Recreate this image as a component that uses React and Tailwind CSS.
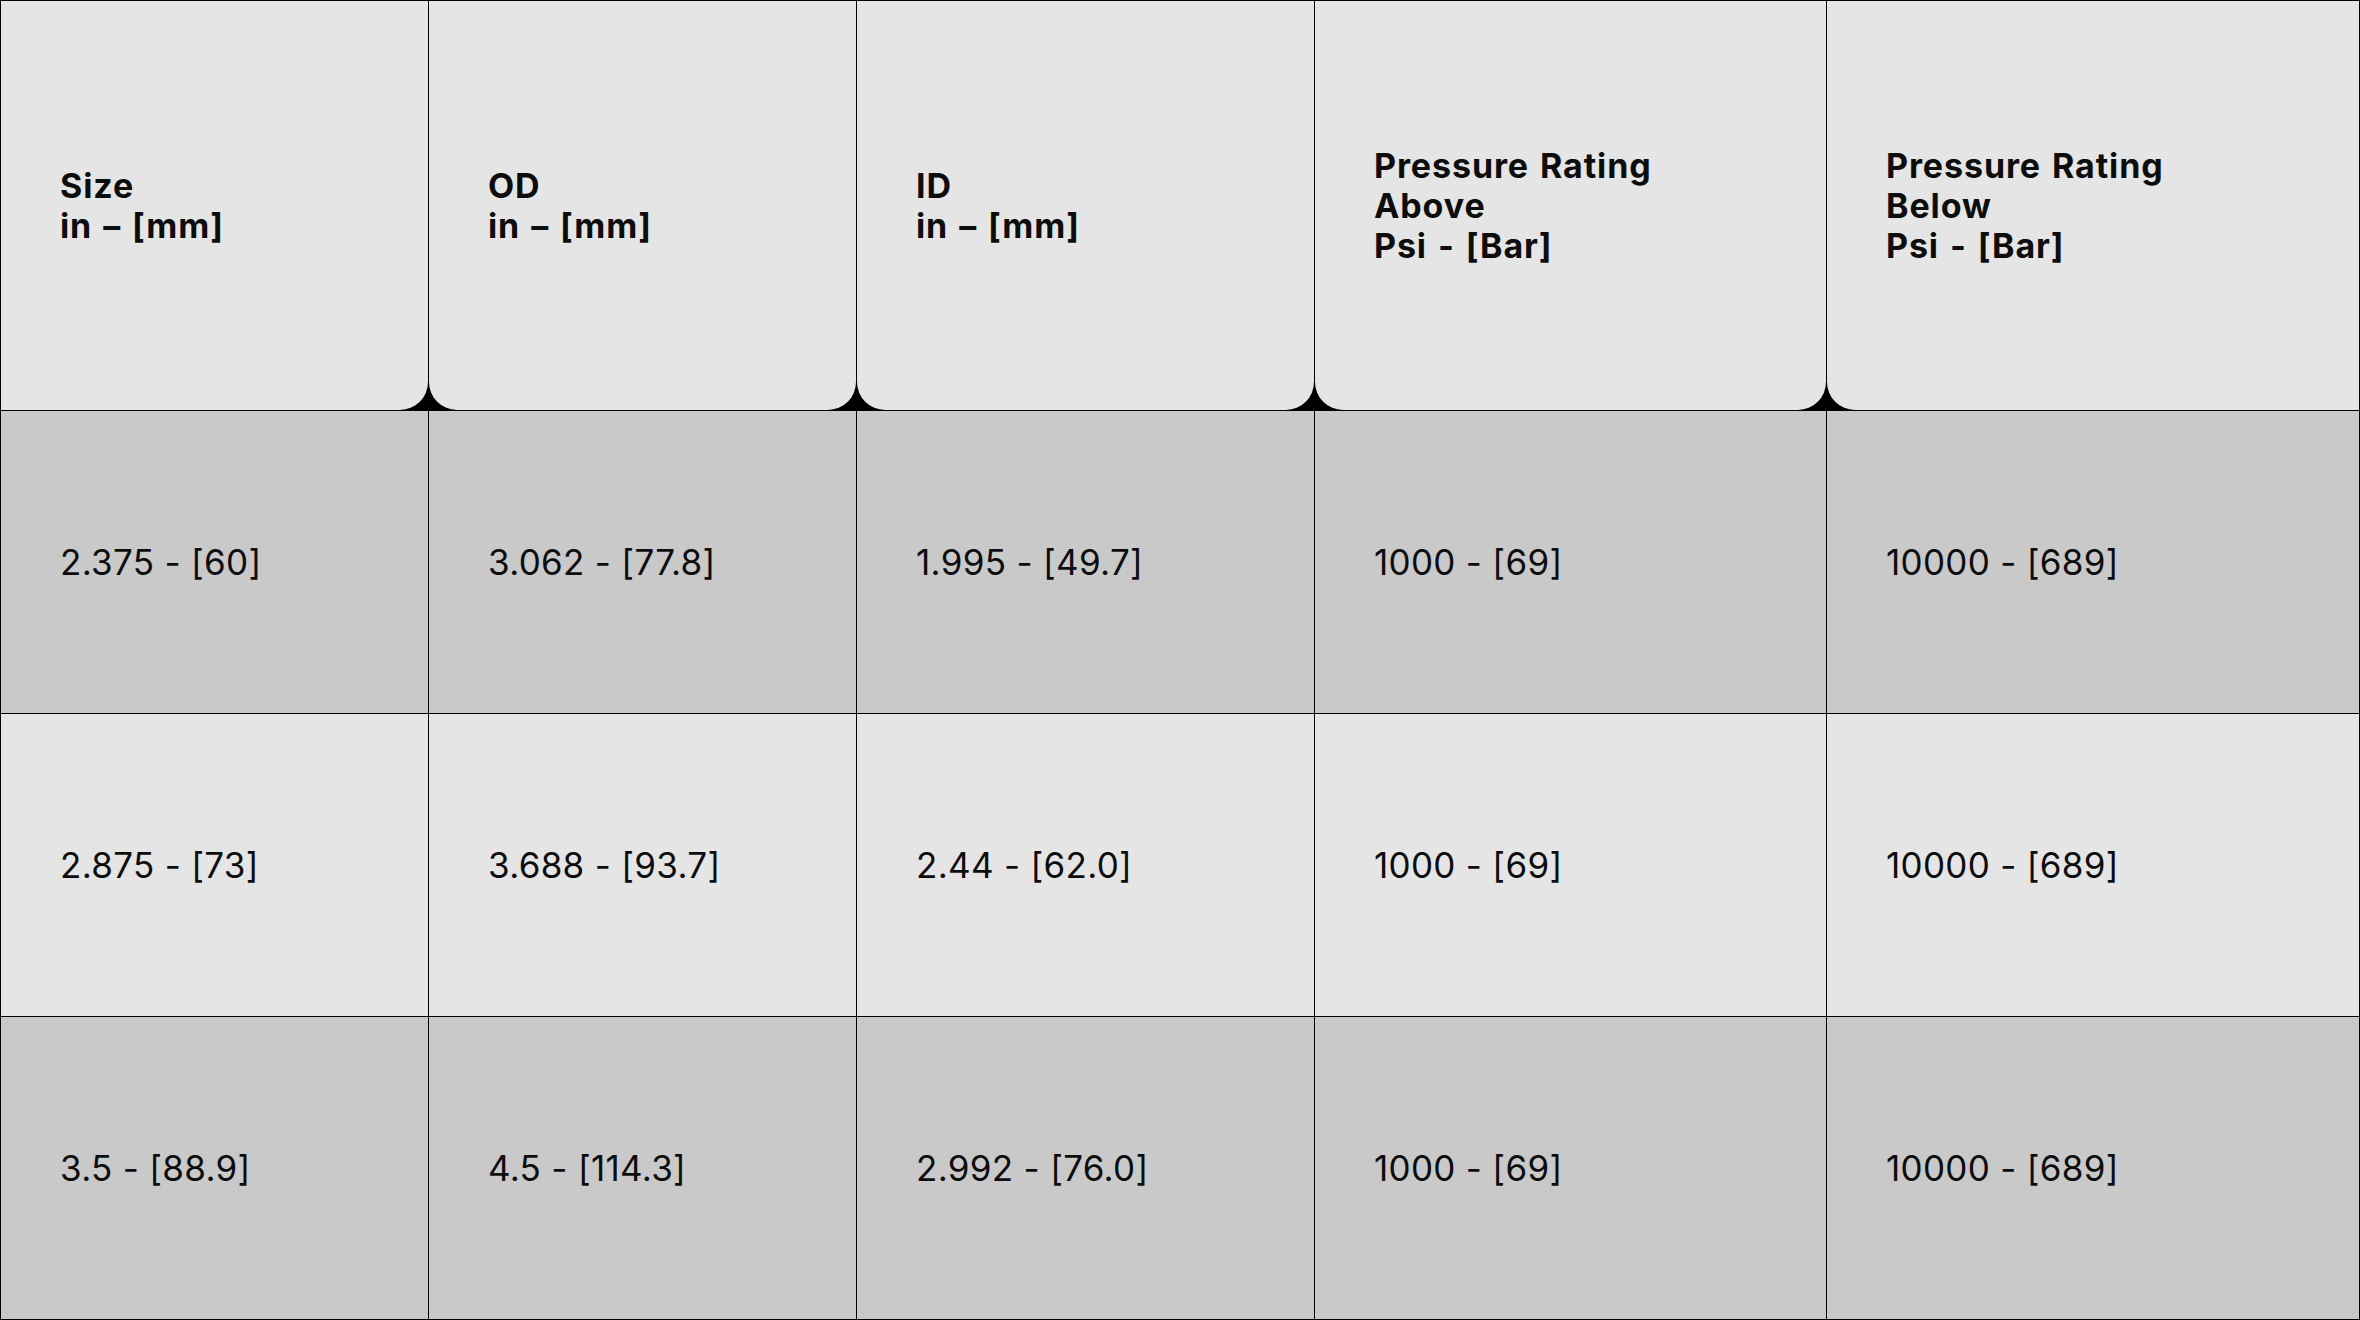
import React from "react";

const headers = [
  ["Size", "in – [mm]"],
  ["OD", "in – [mm]"],
  ["ID", "in – [mm]"],
  ["Pressure Rating", "Above", "Psi - [Bar]"],
  ["Pressure Rating", "Below", "Psi - [Bar]"],
];

const rows = [
  ["2.375 - [60]", "3.062 - [77.8]", "1.995 - [49.7]", "1000 - [69]", "10000 - [689]"],
  ["2.875 - [73]", "3.688 - [93.7]", "2.44 - [62.0]", "1000 - [69]", "10000 - [689]"],
  ["3.5 - [88.9]", "4.5 - [114.3]", "2.992 - [76.0]", "1000 - [69]", "10000 - [689]"],
];

const headerRound = [
  "rounded-br-[28px]",
  "rounded-bl-[28px] rounded-br-[28px]",
  "rounded-bl-[28px] rounded-br-[28px]",
  "rounded-bl-[28px] rounded-br-[28px]",
  "rounded-bl-[28px]",
];

export default function App() {
  return (
    <div
      className="w-[2360px] h-[1320px] bg-black p-px text-[#0d0d0d]"
      style={{ fontFamily: "Inter, 'Liberation Sans', sans-serif" }}
    >
      <div className="grid h-full grid-cols-[427px_427px_457px_511px_532px] grid-rows-[409px_302px_302px_302px] gap-px">
        {headers.map((h, i) => (
          <div
            key={"h" + i}
            className={`bg-[#e5e5e5] flex items-center pl-[59px] ${headerRound[i]}`}
          >
            <div className="text-[34px] leading-[40px] font-bold tracking-[0.9px] [word-spacing:2px]">
              {h.map((line, j) => (
                <div key={j}>{line}</div>
              ))}
            </div>
          </div>
        ))}
        {rows.map((r, ri) =>
          r.map((c, ci) => (
            <div
              key={ri + "-" + ci}
              className={`${ri % 2 === 0 ? "bg-[#c9c9c9]" : "bg-[#e5e5e5]"} flex items-center pl-[59px]`}
            >
              <span className="text-[35px] leading-[40px] font-normal tracking-[0.3px]">{c}</span>
            </div>
          ))
        )}
      </div>
    </div>
  );
}
